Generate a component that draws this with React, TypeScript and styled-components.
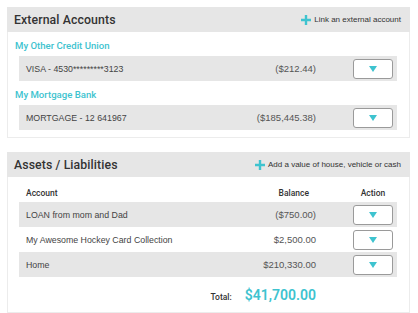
import React from "react";
import styled, { createGlobalStyle } from "styled-components";

const teal = "#3ec3cf";

const GlobalStyle = createGlobalStyle`
  body {
    margin: 0;
    background: #ffffff;
    font-family: "Liberation Sans", Arial, sans-serif;
    color: #444;
  }
`;

const Page = styled.div`
  padding: 7px 8px 0 7px;
  display: flex;
  flex-direction: column;
  gap: 14px;
`;

const Panel = styled.section`
  width: 403px;
`;

const PanelHeader = styled.div`
  height: 25px;
  background: #e6e6e6;
  display: flex;
  align-items: center;
  justify-content: space-between;
  padding: 0 9px 0 7px;
`;

const Title = styled.h2`
  margin: 0;
  font-size: 12.3px;
  font-weight: 500;
  font-family: Roboto, "Liberation Sans", sans-serif;
  color: #333;
  letter-spacing: 0.1px;
`;

const AddLink = styled.a`
  display: flex;
  align-items: center;
  gap: 3px;
  font-size: 8px;
  color: #333;
  text-decoration: none;
`;

const PanelBody = styled.div`
  border: 1px solid #ececec;
  border-top: none;
  padding: 0 12px 7px 0;
`;

const BankName = styled.div`
  padding: 8px 0 4px 7px;
  line-height: 12px;
  font-size: 9.6px;
  font-weight: 500;
  font-family: Roboto, "Liberation Sans", sans-serif;
  color: ${teal};
`;

const Row = styled.div<{ $shaded?: boolean }>`
  margin-left: 11px;
  height: 25px;
  background: ${(p) => (p.$shaded ? "#e6e6e6" : "transparent")};
  display: grid;
  grid-template-columns: 1fr auto 40px;
  column-gap: 37px;
  align-items: center;
  padding: 0 4px 0 7px;
`;

const Label = styled.span`
  font-size: 8.8px;
  color: #444;
`;

const Amount = styled.span`
  font-size: 9.5px;
  color: #555;
  text-align: right;
`;

const HeadRow = styled(Row)`
  height: auto;
  padding-top: 10px;
  padding-bottom: 3px;
  line-height: 12px;
`;

const HeadCell = styled.span<{ $align?: string }>`
  font-size: 8.5px;
  font-weight: 500;
  font-family: Roboto, "Liberation Sans", sans-serif;
  color: #333;
  text-align: ${(p) => p.$align || "left"};
  justify-self: ${(p) => (p.$align === "center" ? "center" : "stretch")};
  white-space: nowrap;
`;

const ActionButton = styled.button`
  width: 40px;
  height: 20px;
  padding: 0;
  border: 1px solid #9a9a9a;
  border-radius: 3px;
  background: #fff;
  display: flex;
  align-items: center;
  justify-content: center;
`;

const TotalRow = styled.div`
  display: flex;
  justify-content: flex-end;
  align-items: baseline;
  gap: 13px;
  padding: 10px 81px 0 0;
  height: 28px;
  box-sizing: border-box;
`;

const TotalLabel = styled.span`
  font-size: 8.5px;
  font-weight: 500;
  font-family: Roboto, "Liberation Sans", sans-serif;
  color: #333;
`;

const TotalAmount = styled.span`
  font-size: 14px;
  font-weight: 600;
  font-family: Roboto, "Liberation Sans", sans-serif;
  color: ${teal};
`;

const Plus = () => (
  <svg width="10" height="10" viewBox="0 0 10 10">
    <path d="M5 0v10M0 5h10" stroke={teal} strokeWidth="2.4" />
  </svg>
);

const Caret = () => (
  <svg width="8" height="6" viewBox="0 0 8 6">
    <path d="M0 0h8L4 6z" fill={teal} />
  </svg>
);

const externalAccounts = [
  { bank: "My Other Credit Union", label: "VISA - 4530*********3123", amount: "($212.44)" },
  { bank: "My Mortgage Bank", label: "MORTGAGE - 12 641967", amount: "($185,445.38)" },
];

const assets = [
  { label: "LOAN from mom and Dad", amount: "($750.00)" },
  { label: "My Awesome Hockey Card Collection", amount: "$2,500.00" },
  { label: "Home", amount: "$210,330.00" },
];

export default function App() {
  return (
    <Page>
      <GlobalStyle />
      <Panel>
        <PanelHeader>
          <Title>External Accounts</Title>
          <AddLink href="#">
            <Plus />
            Link an external account
          </AddLink>
        </PanelHeader>
        <PanelBody>
          {externalAccounts.map((a) => (
            <div key={a.bank}>
              <BankName>{a.bank}</BankName>
              <Row $shaded>
                <Label>{a.label}</Label>
                <Amount>{a.amount}</Amount>
                <ActionButton>
                  <Caret />
                </ActionButton>
              </Row>
            </div>
          ))}
        </PanelBody>
      </Panel>

      <Panel>
        <PanelHeader>
          <Title>Assets / Liabilities</Title>
          <AddLink href="#">
            <Plus />
            Add a value of house, vehicle or cash
          </AddLink>
        </PanelHeader>
        <PanelBody>
          <HeadRow>
            <HeadCell>Account</HeadCell>
            <HeadCell $align="right" style={{ paddingRight: 7 }}>
              Balance
            </HeadCell>
            <HeadCell $align="center">Action</HeadCell>
          </HeadRow>
          {assets.map((a, i) => (
            <Row key={a.label} $shaded={i % 2 === 0}>
              <Label>{a.label}</Label>
              <Amount>{a.amount}</Amount>
              <ActionButton>
                <Caret />
              </ActionButton>
            </Row>
          ))}
          <TotalRow>
            <TotalLabel>Total:</TotalLabel>
            <TotalAmount>$41,700.00</TotalAmount>
          </TotalRow>
        </PanelBody>
      </Panel>
    </Page>
  );
}
